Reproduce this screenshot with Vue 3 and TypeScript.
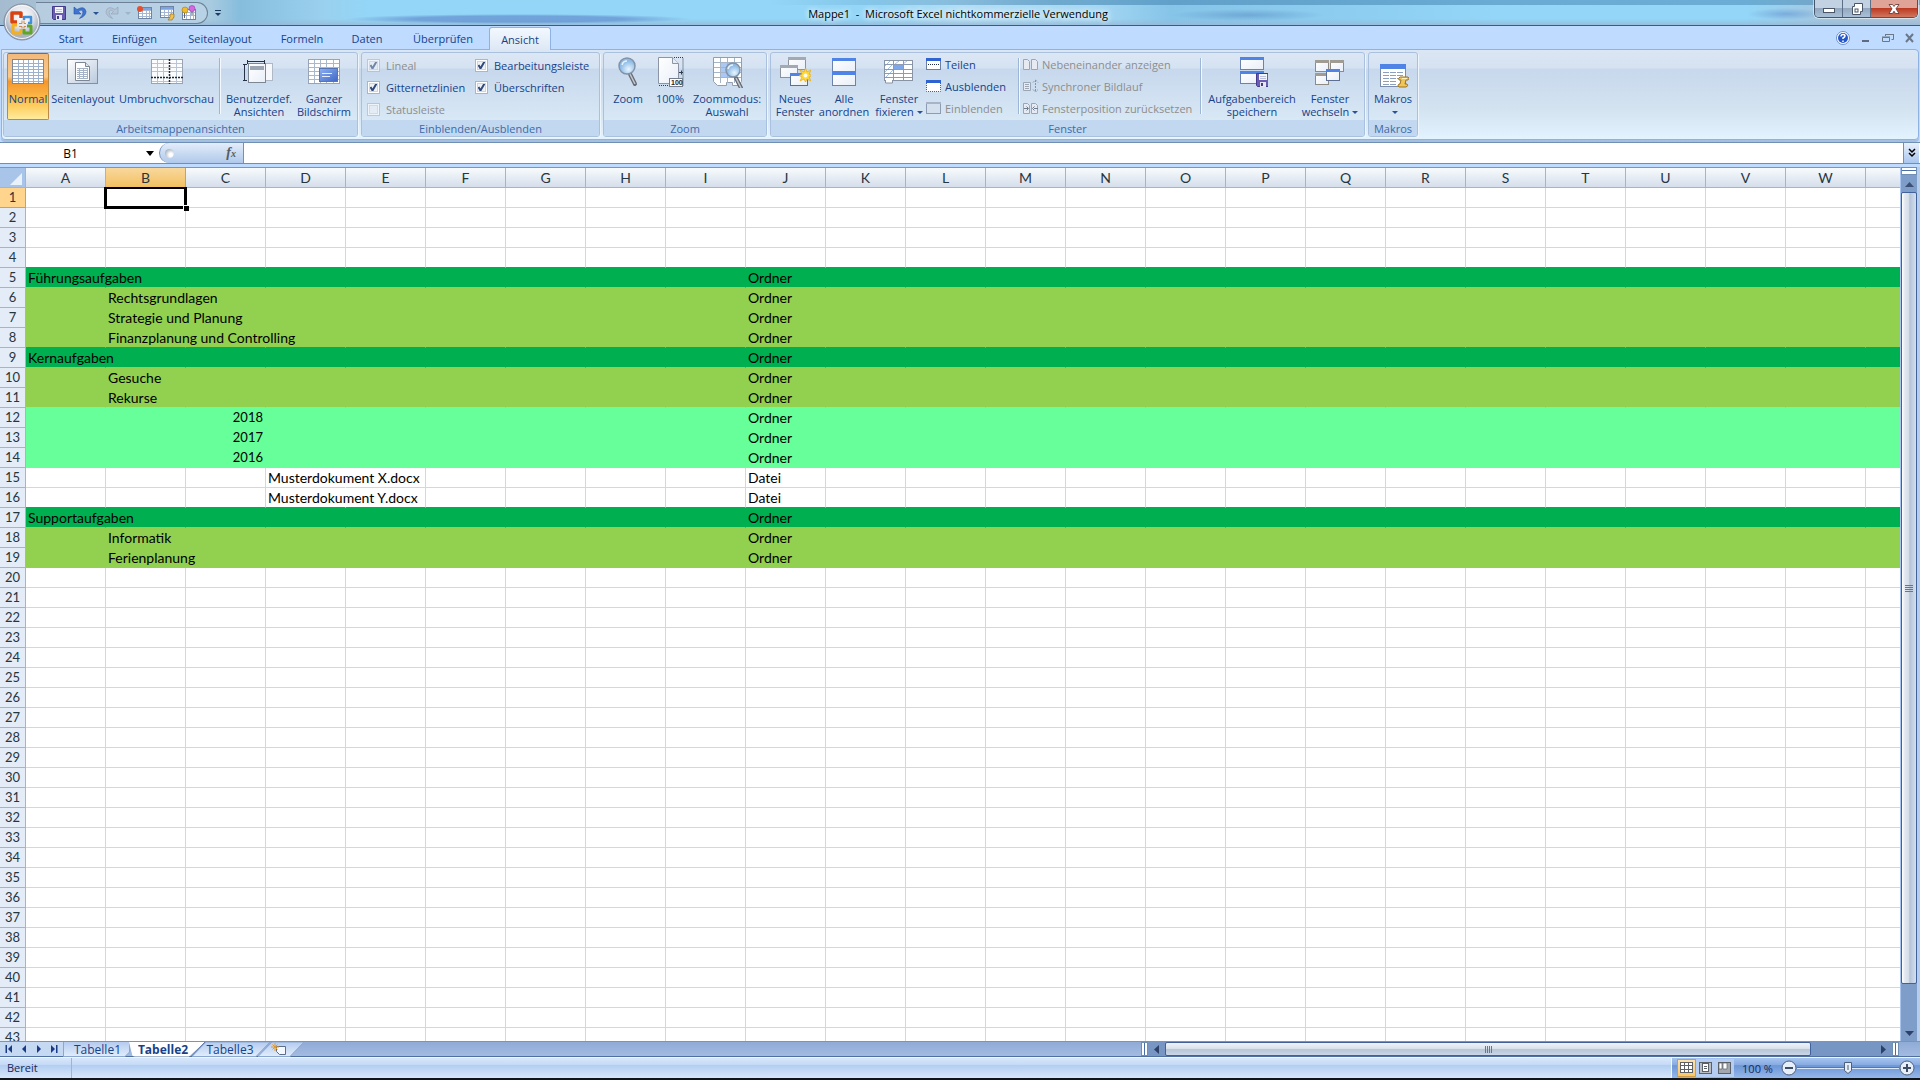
<script setup lang="ts">
import { ref } from 'vue'

interface BigButton { icon: string; lines: string[]; width: number; active?: boolean; arrow?: boolean }
interface SmallButton { icon: string; label: string; disabled?: boolean }
interface Check { id: string; label: string; checked: boolean; disabled?: boolean }
interface Row { n: number; fill: string; next: string; cells: Record<string, string> }

const win = (x: number, y: number, w: number, h: number, bar: string, line: string) =>
  `<rect x="${x + 0.5}" y="${y + 0.5}" width="${w}" height="${h}" fill="url(#paper)" stroke="${line}"/><rect x="${x}" y="${y}" width="${w + 1}" height="3" fill="${bar}"/>`

const lines = (x0: number, x1: number, xs: number[], y0: number, y1: number, ys: number[], color: string) =>
  `<path stroke="${color}" fill="none" d="${xs.map(x => `M${x}.5 ${y0}V${y1}`).join('')}${ys.map(y => `M${x0} ${y}.5H${x1}`).join('')}"/>`

const floppy = (x: number, y: number) =>
  `<g transform="translate(${x} ${y})"><path d="M.5.5h13v13h-12l-1-1z" fill="#6a5cb0" stroke="#443a8c"/><rect x="3" y="1" width="8" height="6" fill="#f4f6fd"/><path d="M4 3.500h6M4 5.500h6" stroke="#b8bedb"/><rect x="4" y="9" width="6" height="5" fill="#e4e6f2"/><rect x="5" y="10" width="2" height="3" fill="#443a8c"/></g>`

const lens = (x: number, y: number, r = 8) =>
  `<g transform="translate(${x} ${y})"><path d="M12 17l5 10" stroke="#666b73" stroke-width="4" stroke-linecap="round"/><path d="M12 17l5 10" stroke="#c3c7cd" stroke-width="1.500"/><circle cx="9" cy="9" r="${r}" fill="url(#glass)" stroke="#8292a8" stroke-width="1.500"/><path d="M4 8q1-4 5-4" stroke="#fff" stroke-width="1.500" fill="none" opacity=".8"/></g>`

const scroll = (x: number, y: number) =>
  `<g transform="translate(${x} ${y})"><path d="M2 1h8q2 1 0 3H8l-1 4h2q2 2-1 3H1q-2-1 0-3h1l1-4H1Q0 2 2 1z" fill="#f0c65a" stroke="#9a7420"/><path d="M4 2.500h5" stroke="#fff0b8"/></g>`

const icons: Record<string, string> = {
  normal: '<rect x=".5" y="3.500" width="31" height="24" fill="#fff" stroke="#7d8794"/>' +
    lines(1, 31, [6, 11, 16, 21, 26], 4, 27, [7, 10, 13, 16, 19, 22, 25], '#9db1cc'),
  layout: '<rect x=".5" y="3.500" width="30" height="24" fill="url(#steel)" stroke="#8390a3"/><path d="M8.500 6.500h10l4 4v14h-14z" fill="#fff" stroke="#7c8695"/><path d="M18.500 6.500v4h4" fill="#dfe5ee" stroke="#7c8695"/>' +
    lines(10, 21, [12, 16, 20], 12, 23, [12, 14, 16, 18, 20, 22], '#a6b3c7'),
  breaks: '<rect x=".5" y="3.500" width="31" height="24" fill="#fbfcfe" stroke="#98a4b5"/>' +
    lines(1, 31, [6, 12, 25], 4, 27, [7, 11, 15, 25], '#b9c5d6') +
    '<path d="M18.500 3v25M0 21.500h32" stroke="#20293a" stroke-dasharray="2 1" stroke-width="1.500"/>',
  custom: '<rect x="12.500" y="7.500" width="17" height="17" fill="#f6f8fb" stroke="#aeb8c6"/><rect x="5.500" y="7.500" width="17" height="19" fill="url(#paper)" stroke="#7c8695"/><rect x="7" y="10" width="14" height="4" fill="#9ba5b4"/><path d="M4 5.500h18M4.500 4v4M21.500 4v4M1.500 8.500v16M0 8.500h4M0 24.500h4" stroke="#253246"/>',
  full: '<rect x=".5" y="3.500" width="31" height="24" fill="#fff" stroke="#98a4b5"/>' +
    lines(1, 31, [6, 12, 18, 25], 4, 27, [7, 11, 15, 19, 23], '#aab8cc') +
    '<rect x="11.500" y="12.500" width="18" height="13" fill="url(#blue)" stroke="#5675b5"/><path d="M14 17.500h10M14 20.500h8" stroke="#e5eeff"/>',
  zoom: lens(6, 1),
  hundred: '<path d="M4.500 1.500h14l6 6v20h-20z" fill="url(#paper)" stroke="#8b95a5"/><path d="M18.500 1.500v6h6" fill="#e8edf4" stroke="#8b95a5"/><path d="M20 1.500h9v28h-25" fill="none" stroke="#333c4c" stroke-dasharray="1 1"/><path d="M25 16.500h4M27.500 14.500v4" stroke="#333c4c"/><rect x="15.500" y="22.500" width="13" height="8" fill="#fff" stroke="#747d8c"/><text x="17" y="29" font-family="Liberation Sans,sans-serif" font-size="7" font-weight="700" fill="#222">100</text>',
  zoomsel: '<path d="M2.500 1.500h28v24l-3 4h-6v-3h-6v3h-9l-4-4z" fill="#fff" stroke="#929eb0"/><rect x="9" y="7" width="14" height="15" fill="#a9c8f4"/>' +
    lines(3, 30, [9, 16, 23], 2, 27, [6, 11, 16, 21], '#a6b4c8') + lens(13, 5, 7),
  newwin: win(9, 1, 17, 12, '#a3a9b3', '#8d939e') + win(1, 9, 17, 12, '#a3a9b3', '#8d939e') + win(11, 17, 17, 12, '#4f83e6', '#5b6f93') +
    '<path d="M26.500 12l1.500 4 4-2-2 4 3 1.500-3 1.500 2 4-4-2-1.500 3-1.500-3-4 2 2-4-3-1.500 3-1.500-2-4 4 2z" fill="#ffd83c" stroke="#e8a90e" stroke-width=".7"/><circle cx="26.500" cy="19.500" r="2" fill="#fffbe0"/>',
  arrange: win(4, 2, 23, 13, '#4f83e6', '#6b82ad') + win(4, 16, 23, 13, '#4f83e6', '#6b82ad'),
  freeze: '<rect x="1.500" y="4.500" width="28" height="20" fill="#fff" stroke="#8894a6"/><path d="M2 10l5-5M2 16l8-8M2 22l8-8M12 8l4-3M20 8l4-3" stroke="#a3c1e8"/><rect x="11" y="9" width="9" height="4" fill="#7ea6ea"/>' +
    lines(2, 29, [10, 20], 5, 24, [8, 13, 17, 21], '#8c9bb2') + '<path d="M2.500 24v3h7v-3" fill="#fff" stroke="#8894a6"/>',
  savews: win(4, 1, 23, 12, '#4f83e6', '#6b82ad') + win(4, 15, 23, 12, '#4f83e6', '#6b82ad') + floppy(20, 17),
  switchw: win(1, 4, 13, 11, '#a09c94', '#8f8b84') + win(16, 4, 13, 11, '#a09c94', '#8f8b84') + win(1, 17, 13, 11, '#a09c94', '#8f8b84') + win(12, 13, 13, 11, '#4f83e6', '#5d6f94'),
  macros: '<rect x="3.500" y="8.500" width="25" height="22" fill="#fff" stroke="#7c8ca8"/><rect x="3" y="8" width="26" height="5" fill="#4f83e6"/><path d="M6 16.500h6M13 16.500h6M20 16.500h6M6 19.500h6M13 19.500h6M20 19.500h6M6 22.500h6M13 22.500h6M20 22.500h3M6 25.500h6M13 25.500h6M6 28.500h6M13 28.500h6" stroke="#8ba0bf"/>' + scroll(21, 20),
  split: '<rect x=".5" y="2.500" width="14" height="11" fill="#fff" stroke="#6b7f9f"/><rect y="2" width="15" height="3" fill="#2f63cf"/><path d="M2 8.500h12" stroke="#1e2c48" stroke-dasharray="1 1"/>',
  hide: '<path d="M.500 5v8.500h14V5" fill="#fff" stroke="#555f70" stroke-dasharray="1 1"/><rect y="2" width="15" height="3" fill="#2f63cf"/>',
  unhide: '<rect x=".5" y="2.500" width="14" height="11" fill="#d5e0ee" stroke="#8d9cb2"/><rect y="2" width="15" height="2" fill="#a7b4c7"/>',
  side: '<path d="M.500 3.500h4l2 2v8h-6zM8.500 3.500h4l2 2v8h-6z" fill="#e7ebf1" stroke="#9ba6b5"/>',
  sync: '<path d="M.500 4.500h7v8h-7z" fill="#e7ebf1" stroke="#9ba6b5"/><path d="M2 6.500h4M2 8.500h4M2 10.500h4" stroke="#9ba6b5"/><path d="M12.500 2v12M10 4.500L12.500 2 15 4.500M10 11.500l2.500 2.500 2.500-2.500" fill="none" stroke="#8894a6" stroke-dasharray="2 1"/>',
  reset: '<path d="M.500 3.500h4l2 2v8h-6zM8.500 3.500h4l2 2v8h-6z" fill="#e7ebf1" stroke="#9ba6b5"/><path d="M1 8.500h4M3.500 6.500l2 2-2 2M15 8.500h-4M11.500 6.500l-2 2 2 2" fill="none" stroke="#707c8e"/>',
  save: floppy(1, 1),
  undo: '<path d="M2 2v7h7L6.500 6.500Q10 3.500 11 7q0 3-3.500 6.500Q14 11 14 6.500 12.500 0 5 4.500z" fill="#3f74d1" stroke="#2350a4" stroke-width=".6"/>',
  redo: '<path d="M14 2v7H7l2.500-2.500Q6 3.500 5 7q0 3 3.500 6.500Q2 11 2 6.500 3.500 0 11 4.500z" fill="#b4c3d5" stroke="#8da0b6" stroke-width=".6"/>',
  table1: '<rect x="1.500" y="2.500" width="13" height="11" fill="#fff" stroke="#6f83a4"/><rect x="2" y="3" width="12" height="2" fill="#7fa3e0"/>' + lines(2, 14, [5, 9, 12], 5, 13, [5, 8, 11], '#a5b7d3') + '<circle cx="3" cy="4" r="3" fill="#e2502f"/>',
  table2: '<rect x="1.500" y="1.500" width="13" height="11" fill="#fff" stroke="#6f83a4"/><rect x="2" y="2" width="12" height="2" fill="#7fa3e0"/>' + lines(2, 14, [5, 9, 12], 4, 12, [4, 7, 10], '#a5b7d3') + '<path d="M11 9h4v3l-2 3H9l2-3z" fill="#f0c052" stroke="#9a7420" stroke-width=".7"/>',
  table3: '<rect x="1.500" y="4.500" width="13" height="10" fill="#fff" stroke="#6f83a4"/>' + lines(2, 14, [5, 9, 12], 5, 14, [7, 10], '#a5b7d3') + '<path d="M3.500 7v6M11 6v4" stroke="#5f6672"/><circle cx="4" cy="5" r="3" fill="#eebb2c" stroke="#a87c10" stroke-width=".6"/><circle cx="11" cy="3.500" r="3" fill="#d36be0" stroke="#9a3ba8" stroke-width=".6"/>',
}

const viewButtons: BigButton[] = [
  { icon: 'normal', lines: ['Normal'], width: 42, active: true },
  { icon: 'layout', lines: ['Seitenlayout'], width: 68 },
  { icon: 'breaks', lines: ['Umbruchvorschau'], width: 99 },
]
const viewButtons2: BigButton[] = [
  { icon: 'custom', lines: ['Benutzerdef.', 'Ansichten'], width: 70 },
  { icon: 'full', lines: ['Ganzer', 'Bildschirm'], width: 60 },
]
const zoomButtons: BigButton[] = [
  { icon: 'zoom', lines: ['Zoom'], width: 42 },
  { icon: 'hundred', lines: ['100%'], width: 42 },
  { icon: 'zoomsel', lines: ['Zoommodus:', 'Auswahl'], width: 72 },
]
const windowButtons: BigButton[] = [
  { icon: 'newwin', lines: ['Neues', 'Fenster'], width: 42 },
  { icon: 'arrange', lines: ['Alle', 'anordnen'], width: 56 },
  { icon: 'freeze', lines: ['Fenster', 'fixieren'], width: 54, arrow: true },
]
const windowButtons2: BigButton[] = [
  { icon: 'savews', lines: ['Aufgabenbereich', 'speichern'], width: 94 },
  { icon: 'switchw', lines: ['Fenster', 'wechseln'], width: 62, arrow: true },
]
const smallA: SmallButton[] = [
  { icon: 'split', label: 'Teilen' },
  { icon: 'hide', label: 'Ausblenden' },
  { icon: 'unhide', label: 'Einblenden', disabled: true },
]
const smallB: SmallButton[] = [
  { icon: 'side', label: 'Nebeneinander anzeigen', disabled: true },
  { icon: 'sync', label: 'Synchroner Bildlauf', disabled: true },
  { icon: 'reset', label: 'Fensterposition zurücksetzen', disabled: true },
]
const checks = ref<Check[]>([
  { id: 'lineal', label: 'Lineal', checked: true, disabled: true },
  { id: 'gitter', label: 'Gitternetzlinien', checked: true },
  { id: 'status', label: 'Statusleiste', checked: false, disabled: true },
  { id: 'bearb', label: 'Bearbeitungsleiste', checked: true },
  { id: 'ueber', label: 'Überschriften', checked: true },
])
const tabs = [
  { label: 'Start', width: 50 },
  { label: 'Einfügen', width: 77 },
  { label: 'Seitenlayout', width: 94 },
  { label: 'Formeln', width: 70 },
  { label: 'Daten', width: 60 },
  { label: 'Überprüfen', width: 92 },
  { label: 'Ansicht', width: 62 },
]

const columns = 'ABCDEFGHIJKLMNOPQRSTUVW'.split('')
const content: Record<number, [string, Record<string, string>]> = {
  5: ['dark', { A: 'Führungsaufgaben', J: 'Ordner' }],
  6: ['olive', { B: 'Rechtsgrundlagen', J: 'Ordner' }],
  7: ['olive', { B: 'Strategie und Planung', J: 'Ordner' }],
  8: ['olive', { B: 'Finanzplanung und Controlling', J: 'Ordner' }],
  9: ['dark', { A: 'Kernaufgaben', J: 'Ordner' }],
  10: ['olive', { B: 'Gesuche', J: 'Ordner' }],
  11: ['olive', { B: 'Rekurse', J: 'Ordner' }],
  12: ['mint', { C: '2018', J: 'Ordner' }],
  13: ['mint', { C: '2017', J: 'Ordner' }],
  14: ['mint', { C: '2016', J: 'Ordner' }],
  15: ['', { D: 'Musterdokument X.docx', J: 'Datei' }],
  16: ['', { D: 'Musterdokument Y.docx', J: 'Datei' }],
  17: ['dark', { A: 'Supportaufgaben', J: 'Ordner' }],
  18: ['olive', { B: 'Informatik', J: 'Ordner' }],
  19: ['olive', { B: 'Ferienplanung', J: 'Ordner' }],
}
const fillOf = (n: number) => content[n]?.[0] ?? ''
const rows: Row[] = Array.from({ length: 43 }, (_, i) => {
  const n = i + 1
  return { n, fill: fillOf(n), next: fillOf(n + 1) || fillOf(n), cells: content[n]?.[1] ?? {} }
})
const cellRef = ref('B1')
const formula = ref('')
const zoom = ref(50)
</script>

<template>
  <div class="app">
    <svg class="defs" width="0" height="0" aria-hidden="true">
      <defs>
        <linearGradient id="paper" x1="0" y1="0" x2="1" y2="1"><stop offset="0" stop-color="#fff" /><stop offset="1" stop-color="#e9eff8" /></linearGradient>
        <linearGradient id="steel" x1="0" y1="0" x2="1" y2="1"><stop offset="0" stop-color="#fff" /><stop offset="1" stop-color="#b9c9dd" /></linearGradient>
        <linearGradient id="blue" x1="0" y1="0" x2="1" y2="1"><stop offset="0" stop-color="#8db1f4" /><stop offset="1" stop-color="#3f66c4" /></linearGradient>
        <radialGradient id="glass" cx=".6" cy=".7"><stop offset="0" stop-color="#e8f5ff" /><stop offset="1" stop-color="#8fbce6" /></radialGradient>
        <radialGradient id="orb" cx=".5" cy=".35"><stop offset="0" stop-color="#fff" /><stop offset=".6" stop-color="#e3e6ec" /><stop offset="1" stop-color="#a9b3c1" /></radialGradient>
        <linearGradient id="tabfill" x1="0" y1="0" x2="0" y2="1"><stop offset="0" stop-color="#b4cbef" /><stop offset="1" stop-color="#e2edfc" /></linearGradient>
      </defs>
    </svg>

    <header class="titlebar">
      <button class="orb" aria-label="Office">
        <svg width="40" height="40" viewBox="0 0 40 40">
          <circle cx="20" cy="20" r="18" fill="url(#orb)" stroke="#7f8b9c" />
          <circle cx="20" cy="20" r="16.500" fill="none" stroke="#fff" opacity=".8" />
          <g fill="none" stroke-linejoin="round">
            <path d="M15 20h-5v-9h9v5" stroke="#d8430f" stroke-width="3.500" />
            <path d="M22 18v-3h7v6h-3" stroke="#3f8fdb" stroke-width="2.500" />
            <path d="M15 23h-4v8h8v-4" stroke="#f5b021" stroke-width="3" />
            <path d="M22 27v4h7v-7h-4" stroke="#5fa628" stroke-width="3" />
            <path d="M17 21.500h3v-3M24 21.500h-2v-3M17 24.500h3v2M24 24.500h-2v2" stroke="#c98a4a" stroke-width="1" />
          </g>
        </svg>
      </button>
      <div class="qat">
        <button aria-label="Speichern"><svg width="16" height="16" v-html="icons.save" /></button>
        <button aria-label="Rückgängig"><svg width="16" height="16" v-html="icons.undo" /></button>
        <i class="caret"></i>
        <button aria-label="Wiederholen"><svg width="16" height="16" v-html="icons.redo" /></button>
        <i class="caret dim"></i>
        <button class="gap" aria-label="Tabelle einfügen"><svg width="16" height="16" v-html="icons.table1" /></button>
        <button class="gap" aria-label="Makro anzeigen"><svg width="16" height="16" v-html="icons.table2" /></button>
        <button class="gap" aria-label="Farben"><svg width="16" height="16" v-html="icons.table3" /></button>
      </div>
      <button class="qat-more" aria-label="Anpassen"><svg width="8" height="8"><path d="M1 1.500h6" stroke="#1e3a63" /><path d="M1 4h6L4 7z" fill="#1e3a63" /></svg></button>
      <h1 class="title">Mappe1 &nbsp;-&nbsp; Microsoft Excel nichtkommerzielle Verwendung</h1>
      <div class="winctl">
        <button aria-label="Minimieren"><svg width="14" height="14"><rect x="1.500" y="6.500" width="11" height="4" fill="#fff" stroke="#4a5668" /></svg></button>
        <button aria-label="Verkleinern"><svg width="14" height="14"><path d="M4.500 1.500h8v8h-2v3h-8v-8h2z" fill="#fff" stroke="#4a5668" /><rect x="5" y="7" width="3" height="3" fill="#fff" stroke="#4a5668" /></svg></button>
        <button class="close" aria-label="Schließen"><svg width="14" height="14"><path d="M2 2.500h3.500L7 4.500l1.500-2H12L9 6.800l3 4.700H8.500L7 9.200l-1.500 2.300H2l3-4.700z" fill="#fff" stroke="#5c3030" stroke-width=".8" /></svg></button>
      </div>
    </header>

    <nav class="tabs">
      <button v-for="t in tabs" :key="t.label" :class="{ on: t.label === 'Ansicht' }" :style="{ width: t.width + 'px' }">{{ t.label }}</button>
      <div class="mdi">
        <button aria-label="Hilfe"><svg width="14" height="14"><circle cx="7" cy="7" r="6.500" fill="#fff" stroke="#6d8fc6" /><circle cx="7" cy="7" r="5" fill="#2457cc" /><path d="M5 5.500q0-2 2-2t2 1.500q0 1-2 2v1M7 9.500v1.500" stroke="#fff" stroke-width="1.500" fill="none" /></svg></button>
        <button aria-label="Fenster minimieren"><svg width="14" height="14"><path d="M4 10h7" stroke="#5c6b80" stroke-width="2" /></svg></button>
        <button aria-label="Fenster wiederherstellen"><svg width="14" height="14"><path d="M5.500 5v-1.500h8v5h-2M5 3.500h9M2.500 6.500h7v4h-7zM2 6h8" stroke="#6b7888" fill="none" /></svg></button>
        <button aria-label="Fenster schließen"><svg width="14" height="14"><path d="M4 3l7 8M11 3l-7 8" stroke="#6b7888" stroke-width="2" /></svg></button>
      </div>
    </nav>

    <section class="ribbon">
      <div class="group">
        <div class="body">
          <button v-for="b in viewButtons" :key="b.icon" class="big" :class="{ active: b.active }" :style="{ width: b.width + 'px' }">
            <svg width="32" height="32" v-html="icons[b.icon]" /><span v-for="l in b.lines" :key="l">{{ l }}</span>
          </button>
          <i class="sep"></i>
          <button v-for="b in viewButtons2" :key="b.icon" class="big" :style="{ width: b.width + 'px' }">
            <svg width="32" height="32" v-html="icons[b.icon]" /><span v-for="l in b.lines" :key="l">{{ l }}</span>
          </button>
        </div>
        <h2>Arbeitsmappenansichten</h2>
      </div>
      <div class="group">
        <div class="body checks">
          <label v-for="c in checks" :key="c.id" :for="c.id" :class="{ off: c.disabled }">
            <input :id="c.id" v-model="c.checked" type="checkbox" :disabled="c.disabled" />{{ c.label }}
          </label>
        </div>
        <h2>Einblenden/Ausblenden</h2>
      </div>
      <div class="group">
        <div class="body">
          <button v-for="b in zoomButtons" :key="b.icon" class="big" :style="{ width: b.width + 'px' }">
            <svg width="32" height="32" v-html="icons[b.icon]" /><span v-for="l in b.lines" :key="l">{{ l }}</span>
          </button>
        </div>
        <h2>Zoom</h2>
      </div>
      <div class="group">
        <div class="body">
          <button v-for="b in windowButtons" :key="b.icon" class="big" :style="{ width: b.width + 'px' }">
            <svg width="32" height="32" v-html="icons[b.icon]" /><span v-for="(l, i) in b.lines" :key="l">{{ l }}<i v-if="b.arrow && i === 1" class="caret"></i></span>
          </button>
          <div class="smalls first">
            <button v-for="s in smallA" :key="s.icon" :disabled="s.disabled"><svg width="16" height="16" v-html="icons[s.icon]" />{{ s.label }}</button>
          </div>
          <i class="sep"></i>
          <div class="smalls second">
            <button v-for="s in smallB" :key="s.icon" :disabled="s.disabled"><svg width="16" height="16" v-html="icons[s.icon]" />{{ s.label }}</button>
          </div>
          <i class="sep"></i>
          <button v-for="b in windowButtons2" :key="b.icon" class="big" :style="{ width: b.width + 'px' }">
            <svg width="32" height="32" v-html="icons[b.icon]" /><span v-for="(l, i) in b.lines" :key="l">{{ l }}<i v-if="b.arrow && i === 1" class="caret"></i></span>
          </button>
        </div>
        <h2>Fenster</h2>
      </div>
      <div class="group">
        <div class="body">
          <button class="big macro"><svg width="32" height="32" v-html="icons.macros" /><span>Makros</span><span><i class="caret"></i></span></button>
        </div>
        <h2>Makros</h2>
      </div>
    </section>

    <div class="formulabar">
      <input v-model="cellRef" class="namebox" aria-label="Namenfeld" />
      <button class="drop" aria-label="Namen anzeigen"><svg width="8" height="5"><path d="M0 0h8L4 5z" fill="#000" /></svg></button>
      <div class="fx"><i class="knob"></i><button aria-label="Funktion einfügen"><em>f</em><sub>x</sub></button></div>
      <input v-model="formula" class="formula" aria-label="Bearbeitungsleiste" />
      <button class="expand" aria-label="Erweitern"><svg width="8" height="10"><path d="M1 1l3 3 3-3M1 5l3 3 3-3" fill="none" stroke="#000" stroke-width="1.500" /></svg></button>
    </div>

    <main class="workspace">
      <div class="sheet">
        <table>
          <colgroup><col class="rh" /><col v-for="c in columns" :key="c" class="c" /><col /></colgroup>
          <thead>
            <tr>
              <th class="corner"><svg width="12" height="12"><path d="M12 0v12H0z" fill="#e9f1fb" /></svg></th>
              <th v-for="c in columns" :key="c" :class="{ sel: c === 'B' }">{{ c }}</th>
              <th class="last"></th>
            </tr>
          </thead>
          <tbody>
            <tr v-for="r in rows" :key="r.n" :class="[r.fill, r.next && 'b-' + r.next]">
              <th :class="{ sel: r.n === 1 }">{{ r.n }}</th>
              <td v-for="c in columns" :key="c" :class="{ num: c === 'C', spill: c === 'D' && r.cells.D }"><div v-if="c === 'B' && r.n === 1" class="cursor"></div>{{ r.cells[c] }}</td>
              <td class="last"></td>
            </tr>
          </tbody>
        </table>
      </div>
      <div class="vscroll">
        <i class="splitter"></i>
        <button aria-label="Nach oben"><svg width="9" height="5"><path d="M0 5h9L4.500 0z" fill="#3d5074" /></svg></button>
        <div class="vtrack"><div class="vthumb"><i></i><i></i><i></i><i></i></div></div>
        <button aria-label="Nach unten"><svg width="9" height="5"><path d="M0 0h9L4.500 5z" fill="#2d4068" /></svg></button>
      </div>
    </main>

    <div class="sheetbar">
      <div class="navs">
        <button aria-label="Erstes Blatt"><svg width="8" height="8"><path d="M.500 0h1.500v8H.500zM7 0v8L3 4z" fill="#1b3b86" /></svg></button>
        <button aria-label="Vorheriges Blatt"><svg width="8" height="8"><path d="M6 0v8L2 4z" fill="#1b3b86" /></svg></button>
        <button aria-label="Nächstes Blatt"><svg width="8" height="8"><path d="M2 0v8l4-4z" fill="#1b3b86" /></svg></button>
        <button aria-label="Letztes Blatt"><svg width="8" height="8"><path d="M6 0h1.500v8H6zM1 0v8l4-4z" fill="#1b3b86" /></svg></button>
      </div>
      <button class="stab s1"><svg viewBox="0 0 67 15"><path d="M.500 0V14.500H62L66.500 10V0" fill="url(#tabfill)" stroke="#8ba6cf" /></svg><span>Tabelle1</span></button>
      <button class="stab s2"><svg viewBox="0 0 76 15"><path d="M0 0l3 12q0 2.500 3 2.500H60L76 0z" fill="#fff" stroke="none" /><path d="M62 14.500L76 0" stroke="#5d79a8" fill="none" /></svg><span>Tabelle2</span></button>
      <button class="stab s3"><svg viewBox="0 0 78 15"><path d="M14 0L0 14.500H64L78 0z" fill="url(#tabfill)" stroke="#8ba6cf" /></svg><span>Tabelle3</span></button>
      <button class="stab s4" aria-label="Neues Blatt"><svg viewBox="0 0 46 15"><path d="M14 0L0 14.500H32L46 0z" fill="url(#tabfill)" stroke="#8ba6cf" /><path d="M18.500 4.500h9v8h-6l-3-3z" fill="#f4f8ff" stroke="#5b6c8c" /><path d="M17 1v8M13 5h8M14.500 2.500l5 5M19.500 2.500l-5 5" stroke="#e59a26" /></svg></button>
      <div class="hscroll">
        <i class="splitter"></i>
        <button aria-label="Nach links"><svg width="5" height="9"><path d="M5 0v9L0 4.500z" fill="#2d4068" /></svg></button>
        <div class="htrack"><div class="hthumb"><i></i><i></i><i></i><i></i></div></div>
        <button aria-label="Nach rechts"><svg width="5" height="9"><path d="M0 0v9l5-4.500z" fill="#2d4068" /></svg></button>
        <i class="splitter"></i>
      </div>
    </div>

    <footer class="status">
      <span class="ready">Bereit</span>
      <div class="statusright">
        <div class="views">
          <button class="on" aria-label="Normal"><svg width="14" height="12"><rect x=".5" y=".5" width="12" height="10" fill="#fff" stroke="#5b5f66" /><path d="M4.500 1v10M8.500 1v10M1 3.500h12M1 7.500h12" stroke="#5b5f66" /></svg></button>
          <button aria-label="Seitenlayout"><svg width="14" height="12"><rect x=".5" y=".5" width="12" height="11" fill="#b9bec6" stroke="#5b5f66" /><rect x="3.500" y="1.500" width="6" height="8" fill="#fff" stroke="#5b5f66" /><path d="M5 4.500h3M5 6.500h3" stroke="#5b5f66" /></svg></button>
          <button aria-label="Umbruchvorschau"><svg width="14" height="12"><rect x=".5" y=".5" width="12" height="11" fill="#a2a7af" stroke="#5b5f66" /><path d="M1 1h3v6H1zM5 1h4v6H5z" fill="#fff" stroke="#5b5f66" stroke-width=".7" /></svg></button>
        </div>
        <span class="pct">100 %</span>
        <button class="round" aria-label="Verkleinern"><svg width="16" height="16"><circle cx="8" cy="8" r="7" fill="#e6eef9" stroke="#4d5f7d" /><path d="M4 8h8" stroke="#3f4d65" stroke-width="2" /></svg></button>
        <input v-model="zoom" type="range" min="0" max="100" aria-label="Zoom" />
        <button class="round" aria-label="Vergrößern"><svg width="16" height="16"><circle cx="8" cy="8" r="7" fill="#e6eef9" stroke="#4d5f7d" /><path d="M4 8h8M8 4v8" stroke="#3f4d65" stroke-width="2" /></svg></button>
      </div>
    </footer>
  </div>
</template>

<style>
body { margin: 0; overflow: hidden; }
</style>

<style scoped>
.app { display: flex; flex-direction: column; height: 100vh; background: #bfdbff; font: 11px/13px "Open Sans", "Noto Sans", sans-serif; color: #15428b; overflow: hidden; }
.app * { box-sizing: border-box; }
.defs { position: absolute; }
button { border: 0; padding: 0; margin: 0; background: none; color: inherit; font: inherit; }
button svg { display: block; }
input { font: inherit; margin: 0; padding: 0; border: 0; outline: 0; }

.titlebar { position: relative; display: flex; align-items: flex-start; height: 26px; flex: none; border-bottom: 1px solid #47586f;
  background:
    radial-gradient(ellipse 9% 5px at 27% 19px, rgba(90, 130, 200, .6) 60%, transparent),
    radial-gradient(ellipse 4% 6px at 65% 15px, rgba(80, 130, 185, .45), transparent),
    radial-gradient(ellipse 2% 6px at 93% 14px, rgba(70, 120, 200, .4), transparent),
    linear-gradient(180deg, transparent 75%, rgba(150, 185, 215, .8)),
    linear-gradient(90deg, transparent 40%, rgba(70, 135, 180, .6) 55%, rgba(70, 135, 180, .5)) 0 0 / 100% 5px no-repeat,
    linear-gradient(90deg, #a5bcd0 0, #a9cbe0 210px, #86bddd 240px, #9ad0ee 320px, #93d6f7 370px, #93d6f7 45%, #b2def5 50%, #a5d8f3 57%, #86c4e8 61%, #93d6f7 78%, #93d6f7 91%, #a9c4da 96%, #b0c4d8 100%); }
.orb { position: absolute; left: 2px; top: 2px; z-index: 2; }
.qat { display: flex; align-items: center; height: 22px; margin: 2px 0 0 36px; padding-left: 15px; width: 172px; border: 1px solid #6d8095; border-left: 0; border-radius: 0 11px 11px 0; background: rgba(200, 218, 235, .5); }
.qat button { width: 16px; margin-right: 5px; }
.qat .gap { margin-left: 1px; margin-right: 5px; }
.qat .caret { margin: 0 5px 0 0; }
.caret { display: inline-block; border: 3px solid transparent; border-top-color: #2a5294; border-bottom: 0; margin-left: 3px; vertical-align: 2px; flex: none; }
.caret.dim { border-top-color: #9fb3c9; }
.qat-more { margin: 9px 0 0 6px; }
.title { flex: 1; margin: 6px 120px 0 0; font-size: 11px; line-height: 16px; font-weight: 400; color: #000; text-align: center; white-space: nowrap; text-shadow: 0 0 6px #fff, 0 0 6px #fff; }
.winctl { display: flex; width: 104px; height: 18px; margin-right: 2px; border: 1px solid #45566b; border-top: 0; border-radius: 0 0 5px 5px; overflow: hidden; box-shadow: 0 0 0 1px rgba(255, 255, 255, .5); }
.winctl button { display: grid; place-items: center; width: 28px; border-right: 1px solid #5c6f86; background: linear-gradient(#c3d2e2 0 45%, #93a8bf 50%, #a9c1d8); }
.winctl .close { flex: 1; border: 0; background: linear-gradient(#dfa497 0 45%, #bd3a22 50%, #d0765f); }

.tabs { display: flex; align-items: stretch; height: 23px; flex: none; padding-left: 46px; background: #bfdbff; }
.tabs > button { flex: none; line-height: 26px; white-space: nowrap; }
.tabs .on { margin-top: 1px; line-height: 23px; border: 1px solid #8db2e3; border-bottom: 0; border-radius: 3px 3px 0 0; background: linear-gradient(#f3f8fe, #dde8f5); position: relative; height: 23px; }
.mdi { margin-left: auto; display: flex; align-items: center; gap: 8px; padding-right: 4px; }

.ribbon { display: flex; gap: 3px; height: 91px; flex: none; margin: 0 1px 2px; padding: 2px 1px; border: 1px solid #8db2e3; border-radius: 0 4px 4px 4px; background: linear-gradient(#dbe6f4 0, #d6e2f1 18px, #c8d8ed 19px, #d3e3f0 60px, #e3f4ff 90px); box-shadow: 0 2px 0 #a4bfe0; }
.group { display: flex; flex-direction: column; border: 1px solid #a9c1de; border-radius: 3px; background: linear-gradient(#dce7f5 0, #d5e2f1 15px, #c7d8ed 16px, #d8e8f5 68px); box-shadow: 1px 1px 0 #edf5fd; overflow: hidden; }
.body { display: flex; flex: 1; padding: 0 3px; }
.group h2 { margin: 0; height: 16px; font-size: 11px; line-height: 17px; font-weight: 400; color: #3e6aaa; text-align: center; background: #c1d8f0; }
.big { display: flex; flex-direction: column; align-items: center; flex: none; height: 67px; padding-top: 3px; white-space: nowrap; }
.big svg { flex: none; margin-bottom: 4px; }
.big.active { border: 1px solid #b98a45; border-top-color: #8b6b45; border-radius: 2px; padding-top: 2px; background: linear-gradient(#f2b97c, #fbc98a 35%, #f5952b 42%, #fdc653 75%, #ffec9c); }
.macro { width: 42px; }
.sep { flex: none; width: 2px; height: 56px; margin: 5px 3px; background: linear-gradient(90deg, #9bb6d6 50%, #f4f9ff 50%); }
.checks { display: grid; grid-template-rows: repeat(3, 22px); grid-auto-flow: column; grid-template-columns: 108px 116px; padding: 1px 8px 0 5px; }
.checks label { display: flex; align-items: center; gap: 6px; white-space: nowrap; }
.off, .smalls button:disabled { color: #8d8d8d; }
input[type="checkbox"] { appearance: none; width: 13px; height: 13px; border: 1px solid #a8b6c8; background: #eef2f7; box-shadow: inset 0 0 0 1px #fff, inset 0 0 0 2px #ccd5e0; }
input[type="checkbox"]:checked { background: #eef2f7 url("data:image/svg+xml,%3Csvg xmlns='http://www.w3.org/2000/svg' viewBox='0 0 11 11'%3E%3Cpath d='M2.500 5l2 3.500 4-7' fill='none' stroke='%23304a7c' stroke-width='2'/%3E%3C/svg%3E"); }
input[type="checkbox"]:disabled { opacity: .6; }
.smalls { display: grid; grid-template-rows: repeat(3, 22px); flex: none; }
.first { width: 89px; }
.second { width: 174px; }
.smalls button { display: flex; align-items: center; gap: 3px; white-space: nowrap; }
.smalls svg { flex: none; }

.formulabar { display: flex; flex: none; height: 22px; border-top: 1px solid #6f8fb5; border-bottom: 1px solid #6f8fb5; background: #fff; margin-bottom: 3px; padding-right: 1px; }
.namebox { width: 141px; text-align: center; font-size: 12px; color: #000; background: #fff; }
.drop { width: 18px; display: grid; place-items: center start; padding-left: 5px; }
.fx { display: flex; align-items: center; justify-content: space-between; width: 85px; padding: 0 7px 0 5px; border: 1px solid #7390bb; border-width: 0 1px; border-radius: 10px 0 0 10px; background: linear-gradient(#e3edfa, #b0c9eb); }
.knob { width: 9px; height: 9px; border-radius: 5px; background: radial-gradient(circle at 65% 65%, #fff 20%, #a3aebd 80%); }
.fx button { font: 700 14px/16px "Liberation Serif", serif; color: #555c66; }
.fx sub { font: italic 700 10px/10px "Liberation Serif", serif; vertical-align: 0; }
.formula { flex: 1; color: #000; }
.expand { width: 16px; display: grid; place-items: center; border-left: 1px solid #6f8fb5; background: linear-gradient(#e8f1fc, #a9c6ee); }

.workspace { display: flex; flex: 1; min-height: 0; overflow: hidden; background: #b7cdee; }
.sheet { flex: 1; min-width: 0; overflow: hidden; background: #fff; border-top: 1px solid #7a96bd; border-right: 1px solid #a9c4ee; }
table { table-layout: fixed; width: 100%; border-collapse: separate; border-spacing: 0; font: 14px/19px Lato, "Open Sans", sans-serif; color: #000; }
.rh { width: 26px; }
.c { width: 80px; }
th { font-weight: 400; padding: 0; height: 20px; color: #26363f; text-align: center; border-right: 1px solid #9eb6ce; border-bottom: 1px solid #9eb6ce; }
thead th { background: linear-gradient(#f8fbfd, #d5deeb); }
tbody th { background: #e4ecf7; }
.corner { background: #a9c4e9; text-align: right; }
.corner svg { display: block; margin: 3px 3px 0 auto; }
thead .sel { background: linear-gradient(#f9d89d, #f2c061); border-color: #f29536; }
tbody .sel { background: #ffd58d; border-color: #f29536; }
td { position: relative; height: 20px; padding: 0 2px; white-space: nowrap; border-right: 1px solid #d0d7e5; border-bottom: 1px solid #d0d7e5; }
.num { text-align: right; font-size: 13px; }
tbody th { font-size: 13px; }
.spill { border-right-color: transparent; }
th.last, td.last { border-right: 0; }
.dark { background: #00b050; }
.olive { background: #92d050; }
.mint { background: #66ff99; }
.dark td, .olive td, .mint td { border-right-color: transparent; }
.b-dark td { border-bottom-color: #00b050; }
.b-olive td { border-bottom-color: #92d050; }
.b-mint td { border-bottom-color: #66ff99; }
.cursor { position: absolute; z-index: 1; inset: -1px -2px -2px -2px; border: 3px solid #000; border-top-width: 2px; }
.cursor::after { content: ""; position: absolute; right: -5px; bottom: -5px; width: 6px; height: 6px; background: #000; border: 1px solid #fff; border-width: 1px 0 0 1px; box-sizing: border-box; }

.vscroll { display: flex; flex-direction: column; align-items: stretch; width: 16px; margin-right: 3px; flex: none; background: #7f9dc9; }
.vscroll .splitter { height: 8px; margin: 0 0 2px; border: 1px solid #6f8fb5; background: linear-gradient(#fff 2px, #4a6ea5 2px, #4a6ea5 3px, #fff 3px); }
.vscroll button { height: 15px; display: grid; place-items: center; }
.vtrack { flex: 1; }
.vthumb, .hthumb { display: flex; align-items: center; justify-content: center; gap: 1px; border: 1px solid #41619b; border-radius: 2px; }
.vthumb { flex-direction: column; height: 95%; background: linear-gradient(90deg, #fff, #e3e8ef 20%, #d3dce7 50%, #b3c3d6 55%, #d4e0f0); }
.vthumb i { width: 8px; height: 1px; background: #6b7787; }
.hthumb i { width: 1px; height: 7px; background: #6b7787; }

.sheetbar { display: flex; flex: none; height: 16px; border-top: 1px solid #7893bd; background: linear-gradient(#8fabd6, #a3bbe1); font-size: 12px; border-bottom: 1px solid #50709f; }
.navs { display: flex; align-items: center; gap: 7px; width: 63px; padding-left: 5px; background: #c5d9f3; }
.stab { position: relative; height: 15px; line-height: 15px; }
.stab svg { position: absolute; inset: 0; width: 100%; height: 15px; }
.stab span { position: relative; }
.s1 { width: 67px; padding-left: 2px; }
.s2 { width: 76px; margin-left: -1px; font-weight: 700; padding-right: 8px; z-index: 2; }
.s3 { width: 78px; margin-left: -13px; padding-right: 2px; }
.s4 { width: 46px; margin-left: -12px; }
.hscroll { display: flex; width: 758px; margin: 0 21px 0 auto; background: #7896c3; }
.hscroll .splitter { width: 7px; border: 1px solid #6f8fb5; background: linear-gradient(90deg, #fff 2px, #4a6ea5 2px, #4a6ea5 3px, #fff 3px); }
.hscroll button { width: 17px; display: grid; place-items: center; }
.htrack { flex: 1; }
.hthumb { width: 91%; height: 14px; background: linear-gradient(#eef3f8, #dbe3ec 45%, #b7c5d6 55%, #cbd8e8); }

.status { display: flex; flex: none; height: 23px; border-top: 1px solid #eef5ff; border-bottom: 2px solid #10151c; background: linear-gradient(#d8e7fb, #c6dbf7 32%, #b3cef2 36%, #d7e6fb); color: #15285a; }
.ready { width: 72px; padding-left: 7px; line-height: 19px; border-right: 1px solid #97b5df; }
.statusright { display: flex; align-items: center; width: 249px; margin-left: auto; padding: 0 5px; border-left: 1px solid #f1f7ff; background: linear-gradient(#a6c3ee, #86abe2 35%, #6c96d6 38%, #96b8ea); }
.views { display: flex; width: 57px; height: 18px; background: #b5cdf0; }
.views button { flex: 1; display: grid; place-items: center; }
.views .on { background: linear-gradient(#fde3b0, #fbc562); box-shadow: inset 0 0 0 1px #c99c50; }
.pct { width: 47px; text-align: center; white-space: nowrap; }
.round { width: 16px; flex: none; }
input[type="range"] { appearance: none; flex: 1; min-width: 0; height: 16px; background: linear-gradient(transparent 7px, #4f76b5 7px 8px, #dce9fc 8px 9px, transparent 9px); }
input[type="range"]::-webkit-slider-thumb { appearance: none; width: 10px; height: 14px; background: url("data:image/svg+xml,%3Csvg xmlns='http://www.w3.org/2000/svg' width='10' height='14'%3E%3Cpath d='M1.500 1.500h7v8L5 12.500 1.500 9.500z' fill='%23e9eff8' stroke='%234d5f7d'/%3E%3Cpath d='M5 4v5' stroke='%234d5f7d'/%3E%3C/svg%3E"); }
</style>
